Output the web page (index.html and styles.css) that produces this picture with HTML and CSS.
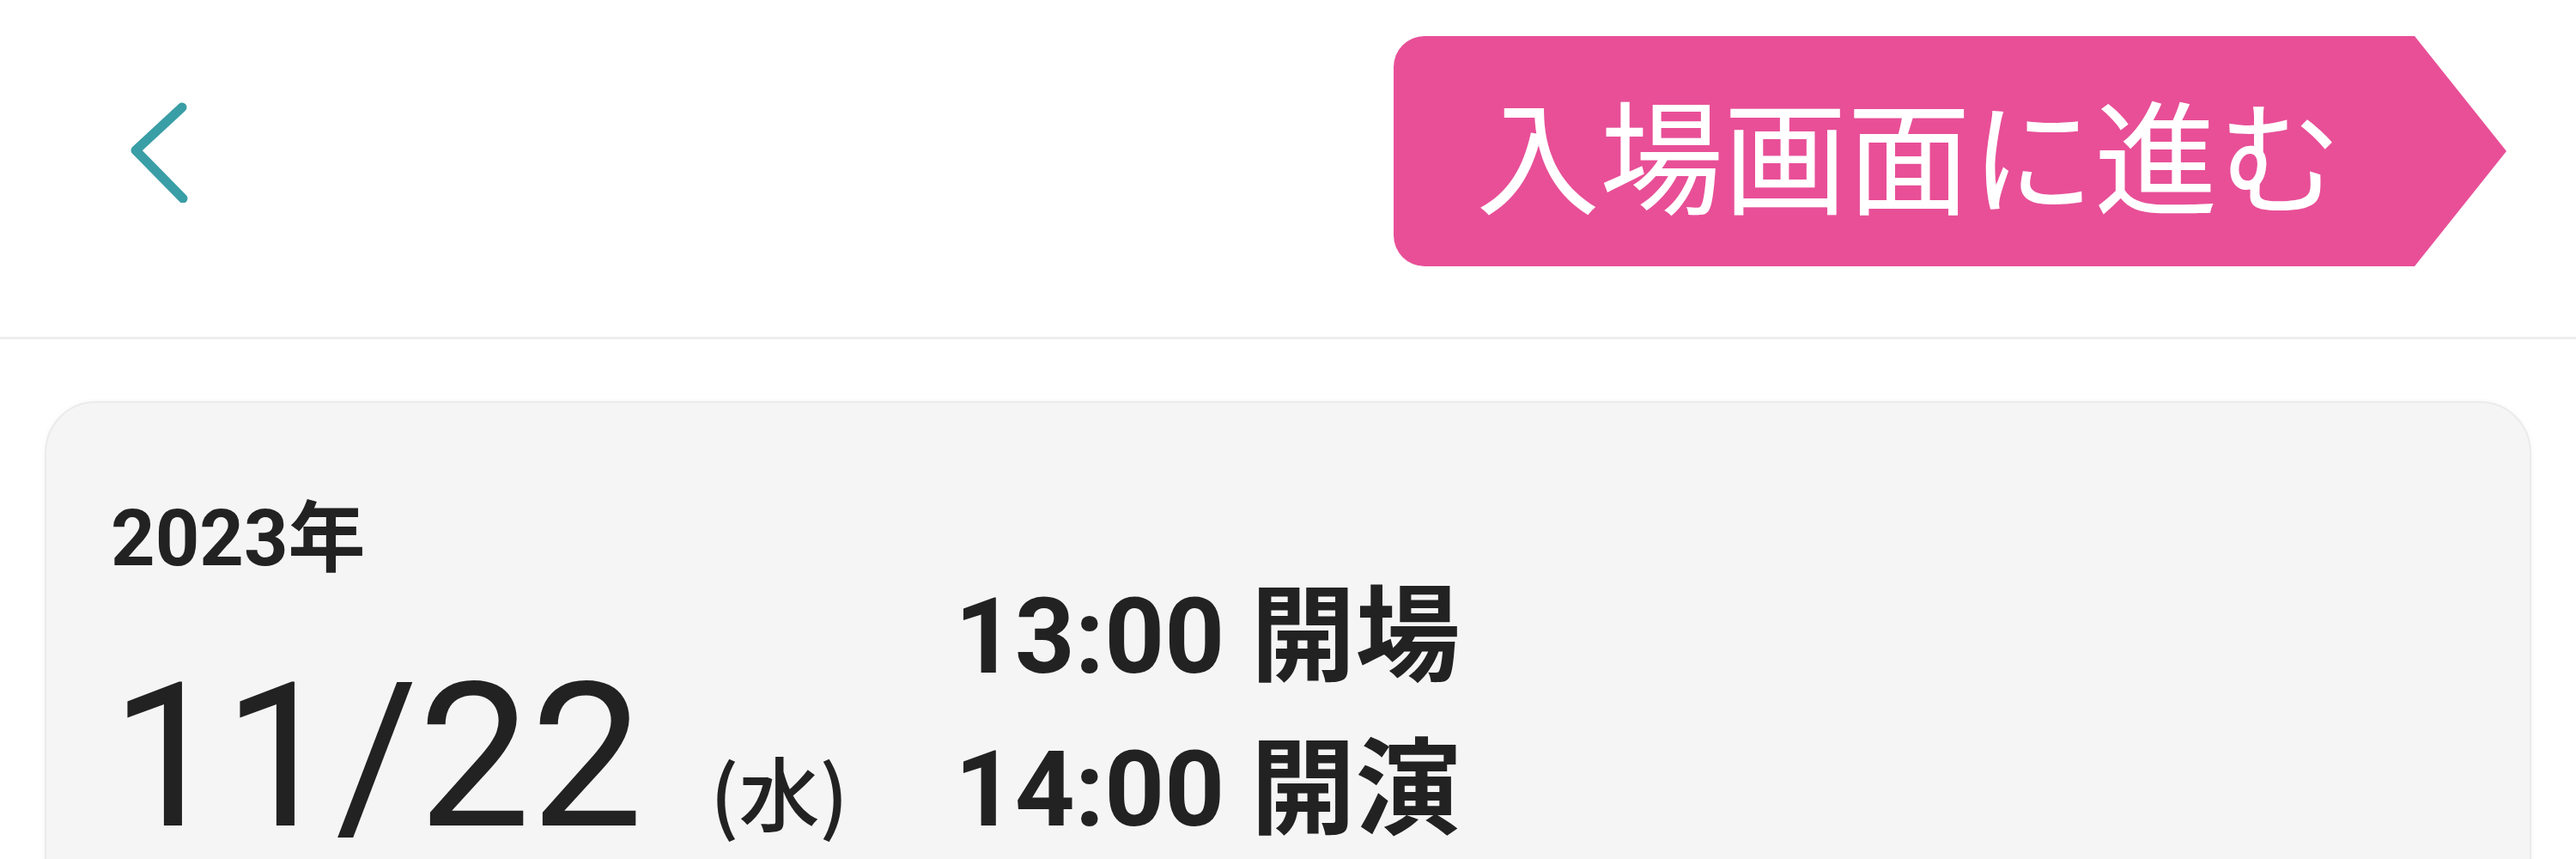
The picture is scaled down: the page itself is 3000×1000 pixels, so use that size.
FILE: index.html
```html
<!DOCTYPE html>
<html lang="ja">
<head>
    <meta charset="UTF-8">
    <meta name="viewport" content="width=device-width, initial-scale=1.0">
    <title>公演詳細</title>
    <link rel="stylesheet" href="styles.css">
</head>
<body>
    <header class="topbar">
        <button class="back" aria-label="戻る">
            <svg width="70" height="120" viewBox="0 0 70 120">
                <polyline points="62,9 8,59 63,115" fill="none" stroke="#3a9ea6" stroke-width="11" stroke-linecap="round" stroke-linejoin="round"/>
            </svg>
        </button>
        <a class="enter-btn" href="#">入場画面に進む</a>
    </header>

    <main class="content">
        <section class="card">
            <div class="schedule">
                <div class="date-col">
                    <div class="year">2023年</div>
                    <div class="date"><span class="md">11/22</span><span class="dow">(水)</span></div>
                </div>
                <ul class="times">
                    <li>13:00 開場</li>
                    <li>14:00 開演</li>
                </ul>
            </div>
        </section>
    </main>
</body>
</html>
```

FILE: styles.css
```css
/* Base */
body {
    margin: 0;
    background: #fff;
    color: #222;
    font-family: Roboto, "Noto Sans CJK JP", sans-serif;
}

/* Top bar */
.topbar {
    display: flex;
    align-items: center;
    justify-content: space-between;
    height: 352px;
    padding: 0 81px 40px 150px;
    border-bottom: 3px solid #ededed;
}

.back {
    display: flex;
    padding: 0;
    border: none;
    background: none;
    cursor: pointer;
}

.enter-btn {
    position: relative;
    display: flex;
    align-items: center;
    height: 268px;
    padding: 0 85px 0 96px;
    margin-right: 107px;
    background: #e84f97;
    border-radius: 36px 0 0 36px;
    color: #fff;
    font-family: "Noto Sans CJK JP", sans-serif;
    font-size: 144px;
    font-weight: 400;
    line-height: 1;
    text-decoration: none;
    white-space: nowrap;
}

/* arrow tip on the right side of the button */
.enter-btn::after {
    content: "";
    position: absolute;
    top: 0;
    left: 100%;
    border-left: 107px solid #e84f97;
    border-top: 134px solid transparent;
    border-bottom: 134px solid transparent;
}

/* Schedule card */
.content {
    padding: 72px 52px 0;
}

.card {
    height: 800px;
    background: #f5f5f5;
    border: 2px solid #ebebeb;
    border-radius: 60px;
    box-shadow: 0 0 6px rgba(0, 0, 0, 0.04);
    padding: 114px 75px 0;
}

.schedule {
    display: flex;
    align-items: flex-end;
}

.year {
    font-size: 90px;
    font-weight: bold;
    line-height: 1;
}

.date {
    margin-top: 92px;
    font-size: 233px;
    line-height: 1;
    white-space: nowrap;
}

.dow {
    margin-left: 78px;
    font-family: "Noto Sans CJK JP", sans-serif;
    font-size: 94px;
    font-weight: 500;
}

.times {
    list-style: none;
    margin: 0 0 -11px 124px;
    padding: 0;
    font-size: 122px;
    font-weight: bold;
    line-height: 178px;
    white-space: nowrap;
}
```
